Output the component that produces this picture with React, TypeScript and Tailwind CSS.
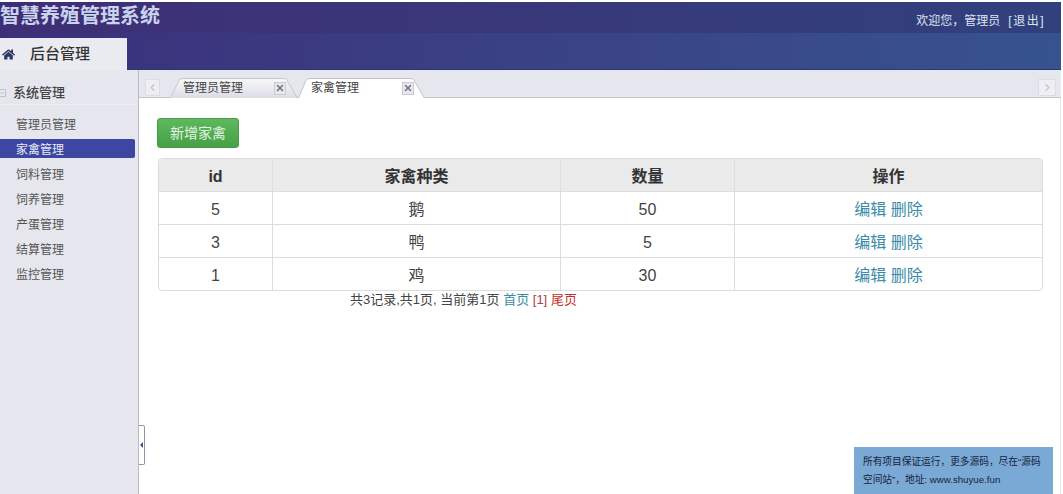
import { ChevronLeft, ChevronRight, X, Minus } from 'lucide-react';
import { FaHome } from 'react-icons/fa';

const menuItems = ['管理员管理', '家禽管理', '饲料管理', '饲养管理', '产蛋管理', '结算管理', '监控管理'];

const rows = [
  { id: 5, name: '鹅', count: 50 },
  { id: 3, name: '鸭', count: 5 },
  { id: 1, name: '鸡', count: 30 },
];

function TabClose() {
  return (
    <span className="flex h-[13px] w-[12px] items-center justify-center border border-[#c9cad2] bg-[#e6e7ec] text-[#6f7180]">
      <X size={10} strokeWidth={3.5} />
    </span>
  );
}

function ScrollButton({ right }: { right?: boolean }) {
  return (
    <span
      className={
        right
          ? 'flex h-[17px] w-[18px] items-center justify-center border border-[#dcdde4] bg-[#eeeef3] text-[#c4c6d0]'
          : 'flex h-[17px] w-[15px] items-center justify-center border border-[#dcdde4] bg-[#eeeef3] text-[#c4c6d0]'
      }
    >
      {right ? <ChevronRight size={11} strokeWidth={3} /> : <ChevronLeft size={11} strokeWidth={3} />}
    </span>
  );
}

function InactiveTab({ label }: { label: string }) {
  return (
    <div className="relative flex h-[20px] w-[128px] items-center justify-between pr-[12px] pl-[13px] text-[12px] leading-[18px] text-[#444]">
      <svg className="absolute inset-0" width="128" height="20" viewBox="0 0 128 20">
        <defs>
          <linearGradient id="tabFade" x1="0" y1="0" x2="0" y2="1">
            <stop offset="0" stopColor="#f8f8fa" />
            <stop offset="1" stopColor="#dcdde5" />
          </linearGradient>
        </defs>
        <path d="M0.5 20 L9 2.5 Q10 0.5 13 0.5 H114 Q116 0.5 117 2.5 L127.5 20" fill="url(#tabFade)" stroke="#c6c7cf" />
      </svg>
      <span className="relative">{label}</span>
      <span className="relative">
        <TabClose />
      </span>
    </div>
  );
}

function ActiveTab({ label }: { label: string }) {
  return (
    <div className="relative flex h-[20px] w-[127px] items-center justify-between pr-[11px] pl-[13px] text-[12px] leading-[18px] text-[#444]">
      <svg className="absolute inset-0" width="127" height="20" viewBox="0 0 127 20">
        <path d="M0.5 20 L8 2.5 Q9 0.5 12 0.5 H113 Q115 0.5 116 2.5 L126.5 20" fill="#ffffff" stroke="#c2c3cb" />
      </svg>
      <span className="relative">{label}</span>
      <span className="relative">
        <TabClose />
      </span>
    </div>
  );
}

export default function App() {
  return (
    <div className="relative h-[494px] w-[1063px] overflow-hidden bg-white pt-[2px] pr-[2px] font-['Liberation_Sans','Noto_Sans_CJK_SC',sans-serif]">
      <div className="flex h-full flex-col bg-[#e6e7ee]">
        {/* Top bar */}
        <header className="flex h-[31px] items-center justify-between bg-gradient-to-r from-[#3e2e76] to-[#30417d] pr-[16px]">
          <h1 className="-mt-[4px] text-[20px] leading-[28px] font-bold text-[#c9d3ee]">智慧养殖管理系统</h1>
          <div className="flex gap-[8px] pt-[6px] text-[12px] leading-[18px] text-[#dfe4f2]">
            <span>欢迎您，管理员</span>
            <span className="tracking-[1.5px]">[退出]</span>
          </div>
        </header>

        {/* Module tabs */}
        <div className="flex h-[37px] items-end border-b border-[#2a3a70] bg-gradient-to-r from-[#3b2f7b] to-[#36538f]">
          <div className="-mb-px flex h-[32px] w-[127px] items-center gap-[15px] bg-[#eaebf0] pl-[2px] text-[15px] font-medium text-[#333]">
            <FaHome size={13} className="text-[#2b3560]" />
            <span>后台管理</span>
          </div>
        </div>

        <div className="flex min-h-0 flex-1">
          {/* Sidebar */}
          <aside className="w-[139px] shrink-0 border-r border-[#b9bac2] bg-[#e6e7ee]">
            <div className="mb-[9px] flex h-[35px] items-center gap-[7px] border-b border-[#eeeff3] pt-[11px] text-[13px] font-medium text-[#444]">
              <span className="-ml-[2px] flex h-[8px] w-[8px] items-center justify-center border border-[#c0c1c9] text-[#a5a6b0]">
                <Minus size={6} />
              </span>
              <span>系统管理</span>
            </div>
            <nav className="flex flex-col gap-[6px] pr-[3px]">
              {menuItems.map((item) => (
                <a
                  key={item}
                  className={
                    item === '家禽管理'
                      ? 'h-[19px] rounded-r-[2px] bg-[#3d47a1] pl-[16px] text-[12px] leading-[23px] text-[#e8e9f5]'
                      : 'h-[19px] pl-[16px] text-[12px] leading-[23px] text-[#555]'
                  }
                >
                  {item}
                </a>
              ))}
            </nav>
          </aside>

          <main className="flex min-w-0 flex-1 flex-col">
            {/* Open page tabs */}
            <div className="flex h-[28px] items-end justify-between border-b border-[#c2c3cb] pr-[5px] pl-[6px]">
              <div className="-mb-px flex h-[20px] items-end">
                <div className="mr-[10px] mb-[2px]">
                  <ScrollButton />
                </div>
                <InactiveTab label="管理员管理" />
                <ActiveTab label="家禽管理" />
              </div>
              <div className="mb-[1px]">
                <ScrollButton right />
              </div>
            </div>

            {/* Page content */}
            <div className="flex-1 border-r border-[#e6e7ee] bg-white pt-[20px] pl-[18px]">
              <button className="h-[30px] w-[82px] rounded-[3px] border border-[#4a9a4a] bg-gradient-to-b from-[#5eb95e] to-[#46a046] text-[14px] text-[#e4f3e4]">
                新增家禽
              </button>

              <table className="mt-[10px] ml-px w-[885px] table-fixed border-separate border-spacing-0 overflow-hidden rounded-[4px] border border-[#dddddd] text-center text-[16px] text-[#444]">
                <colgroup>
                  <col className="w-[113px]" />
                  <col className="w-[288px]" />
                  <col className="w-[174px]" />
                  <col />
                </colgroup>
                <thead>
                  <tr className="h-[32px] bg-[#eaeaea] text-[#333]">
                    <th className="pt-[4px] font-bold">id</th>
                    <th className="border-l border-[#dddddd] pt-[4px] font-bold">家禽种类</th>
                    <th className="border-l border-[#dddddd] pt-[4px] font-bold">数量</th>
                    <th className="border-l border-[#dddddd] pt-[4px] font-bold">操作</th>
                  </tr>
                </thead>
                <tbody>
                  {rows.map((row) => (
                    <tr key={row.id} className="h-[33px]">
                      <td className="border-t border-[#dddddd] pt-[4px]">{row.id}</td>
                      <td className="border-t border-l border-[#dddddd] pt-[4px]">{row.name}</td>
                      <td className="border-t border-l border-[#dddddd] pt-[4px]">{row.count}</td>
                      <td className="border-t border-l border-[#dddddd] pt-[4px] text-[#3a8aa8]">编辑 删除</td>
                    </tr>
                  ))}
                </tbody>
              </table>

              <p className="pl-[193px] text-[13px] leading-[18px] text-[#444]">
                共3记录,共1页, 当前第1页 <span className="text-[#3a8aa8]">首页</span>{' '}
                <span className="text-[#a94442]">[1]</span> <span className="text-[#c0302c]">尾页</span>
              </p>
            </div>
          </main>
        </div>
      </div>

      {/* Sidebar collapse handle */}
      <div className="absolute top-[425px] left-[139px] flex h-[40px] w-[6px] items-center justify-center rounded-r-[2px] border border-l-0 border-[#8d93a8] bg-white">
        <span className="h-0 w-0 border-y-[3px] border-r-[3px] border-y-transparent border-r-[#3b5580]" />
      </div>

      {/* Watermark banner */}
      <div className="absolute top-[447px] left-[854px] h-[47px] w-[199px] bg-[#7aa9d6] py-[6px] pr-[8px] pl-[9px] text-[9.7px] leading-[18px] text-[#16233a]">
        所有项目保证运行，更多源码，尽在“源码空间站”，地址: www.shuyue.fun
      </div>
    </div>
  );
}
